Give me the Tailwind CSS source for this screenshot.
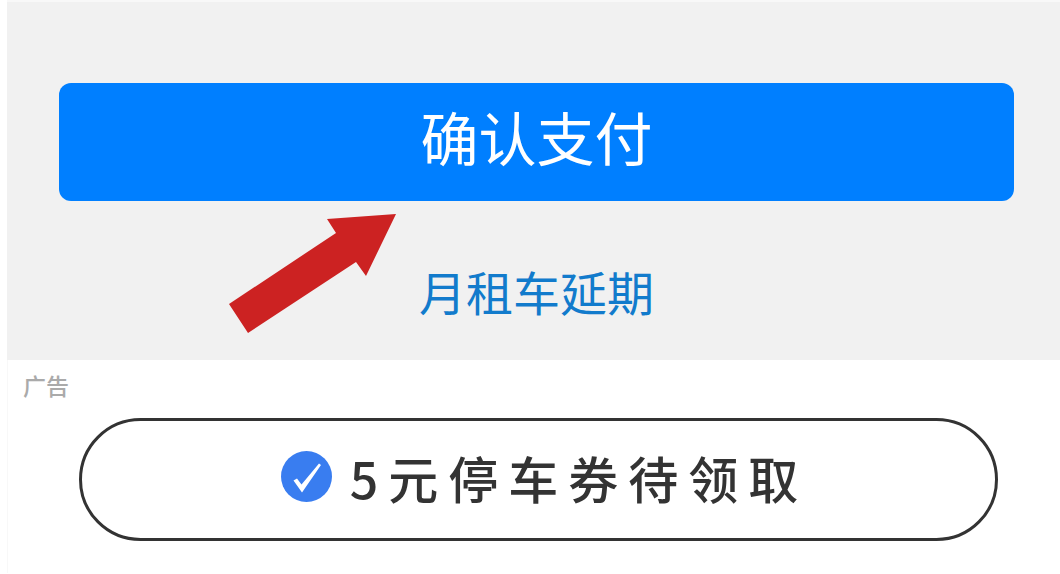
<!DOCTYPE html>
<html lang="zh-CN">
  <head>
    <meta charset="UTF-8" />
    <meta name="viewport" content="width=device-width, initial-scale=1.0" />
    <script src="https://cdn.jsdelivr.net/npm/@tailwindcss/browser@4"></script>
    <title>确认支付</title>
  </head>
  <body
    class="bg-white pl-[7px] font-['Noto_Sans_CJK_SC',sans-serif] overflow-x-hidden"
  >
    <main>
      <!-- payment -->
      <section
        class="relative flex flex-col bg-[#f1f1f1] border-t-2 border-[#f8f8f8] pt-[81px] pb-9 pl-[52px] pr-[46px]"
      >
        <button
          type="button"
          class="w-full h-[118px] pb-3 rounded-xl bg-[#007fff] text-white text-[58px] leading-[60px]"
        >
          确认支付
        </button>
        <a
          href="#"
          class="mt-14 self-center text-[47px] leading-[67px] text-[#127bcc]"
          >月租车延期</a
        >
        <!-- pointer to the pay button -->
        <svg
          class="absolute left-[222px] top-[210px] w-[170px] h-[124px]"
          viewBox="0 0 170 124"
          aria-hidden="true"
        >
          <path
            d="M167 2 L98 7 L107 21 L0 92 L19 121 L127 50 L137 64 Z"
            fill="#cc2222"
          />
        </svg>
      </section>

      <!-- coupon ad -->
      <section class="border-l border-[#f8f8f8] pt-2.5 pb-8 pl-[71px] pr-[62px]">
        <p class="-ml-14 text-[23px] leading-[30px] font-medium text-[#aaaaaa]">
          广告
        </p>
        <button
          type="button"
          class="mt-[18px] flex w-full h-[123px] pl-3 pb-1.5 items-center justify-center gap-[18px] rounded-full border-3 border-[#333333] bg-white text-[50px] leading-[60px] font-medium text-[#333333]"
        >
          <svg class="size-[51px]" viewBox="0 0 51 51" aria-hidden="true">
            <circle cx="25.5" cy="25.5" r="25.5" fill="#397df0" />
            <path
              d="M12.5 29.5 L16 27.5 L20.5 33.5 L38 12.5 L40 14 L21 41.5 Z"
              fill="#fff"
            />
          </svg>
          <span class="tracking-[0.2em]">5元停车券待领取</span>
        </button>
      </section>
    </main>
  </body>
</html>
